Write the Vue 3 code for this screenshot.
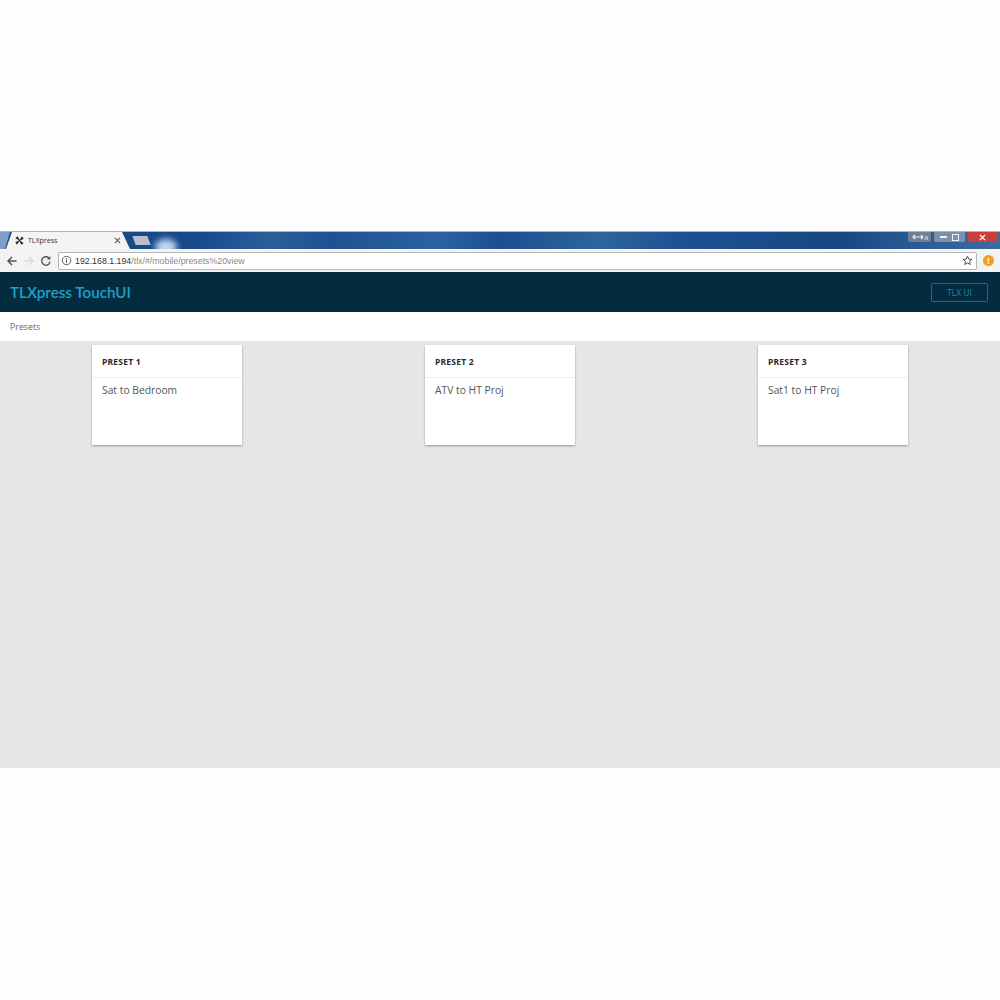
<script setup>
const presets = [
  { id: 1, title: 'PRESET 1', text: 'Sat to Bedroom' },
  { id: 2, title: 'PRESET 2', text: 'ATV to HT Proj' },
  { id: 3, title: 'PRESET 3', text: 'Sat1 to HT Proj' },
]
</script>

<template>
  <div class="page">
    <div class="shot">
      <div class="titlebar">
        <div class="glass-left"></div>
        <div class="tab">
          <svg class="favicon" viewBox="0 0 12 12" width="9" height="9">
            <path d="M6 6 3.500 1 1 2.500ZM6 6 11 3.500 9.500 1ZM6 6 1 8.500 2.500 11ZM6 6 8.500 11 11 9.500Z" fill="#222" stroke="#222" stroke-width=".8" />
          </svg>
          <span class="tab-title">TLXpress</span>
          <svg class="tab-close" viewBox="0 0 8 8" width="7" height="7"><path d="M1 1l6 6M7 1 1 7" fill="none" stroke="#555" stroke-width="1.200"/></svg>
        </div>
        <div class="newtab"></div>
        <div class="glow"></div>
        <div class="winbtns">
          <div class="restore">
            <svg width="18" height="8" viewBox="0 0 18 8"><path d="M2 4h10M4 2 2 4l2 2M10 2l2 2-2 2" fill="none" stroke="#e8edf2" stroke-width="1.200"/><path d="M14 7l1.500-4L17 7" fill="none" stroke="#d8dee6" stroke-width="1"/></svg>
          </div>
          <div class="winctl">
            <span class="min"></span>
            <span class="max"></span>
          </div>
          <div class="close">
            <svg viewBox="0 0 8 8" width="7" height="7"><path d="M1 1l6 6M7 1 1 7" fill="none" stroke="#fff" stroke-width="1.500"/></svg>
          </div>
        </div>
      </div>
      <div class="toolbar">
        <svg class="nav" viewBox="0 0 12 12" width="12" height="12"><path d="M10.500 6H2M6 2 2 6l4 4" fill="none" stroke="#555" stroke-width="1.500"/></svg>
        <svg class="nav" viewBox="0 0 12 12" width="12" height="12"><path d="M1.500 6H10M6 2l4 4-4 4" fill="none" stroke="#dcdcdc" stroke-width="1.500"/></svg>
        <svg class="nav" viewBox="0 0 12 12" width="12" height="12"><path d="M10 6.500A4.200 4.200 0 1 1 8.800 3" fill="none" stroke="#555" stroke-width="1.400"/><path d="M10.400 1v3.600H6.800z" fill="#555"/></svg>
        <div class="omnibox">
          <svg class="info" viewBox="0 0 12 12" width="11" height="11"><circle cx="6" cy="6" r="4.600" fill="none" stroke="#555" stroke-width="1"/><path d="M6 5.200v3.200M6 3.300v1" stroke="#555" stroke-width="1.100"/></svg>
          <span class="url"><span class="host">192.168.1.194</span>/tlx/#/mobile/presets%20view</span>
          <svg class="star" viewBox="0 0 12 12" width="11" height="11"><path d="M6 1.300 7.400 4.500l3.400.3-2.600 2.200.8 3.400L6 8.600l-3 1.800.8-3.400L1.200 4.800l3.400-.3z" fill="none" stroke="#444" stroke-width="1"/></svg>
        </div>
        <div class="alert">!</div>
      </div>
      <header class="appbar">
        <span class="brand">TLXpress TouchUI</span>
        <button class="tlx">TLX UI</button>
      </header>
      <div class="crumb">Presets</div>
      <main class="content">
        <section v-for="p in presets" :key="p.id" class="card">
          <div class="card-head">{{ p.title }}</div>
          <div class="card-body">{{ p.text }}</div>
        </section>
      </main>
    </div>
  </div>
</template>

<style>
html, body { margin: 0; background: #fff; }
</style>

<style scoped>
.page {
  width: 1000px;
  height: 1000px;
  padding-top: 231px;
  box-sizing: border-box;
  background: #fefefe;
  font-family: "Open Sans", "Liberation Sans", sans-serif;
  overflow: hidden;
}
.shot { display: flex; flex-direction: column; height: 537px; }
.titlebar {
  position: relative;
  height: 18px;
  flex: none;
  display: flex;
  align-items: flex-end;
  overflow: hidden;
  background: linear-gradient(100deg, #174888 0, #184a8a 20%, #2a5f9c 27%, #1f5290 33%, #2b629f 44%, #1c4f8e 50%, #2d649f 60%, #1e5190 68%, #184684 84%, #2a5a94 91%, #3d6b9f 100%);
  border-top: 1px solid #a9b6c6;
  box-sizing: border-box;
}
.glass-left {
  width: 10px;
  height: 100%;
  flex: none;
  background: #7f9fc9;
  clip-path: polygon(0 0, 10px 0, 5px 100%, 0 100%);
}
.tab {
  display: flex;
  align-items: center;
  width: 124px;
  height: 100%;
  margin-left: -4px;
  flex: none;
  box-sizing: border-box;
  padding: 0 9px;
  background: #f4f4f4;
  clip-path: polygon(6px 0, 116px 0, 124px 100%, 0 100%);
  color: #333;
}
.favicon { flex: none; margin-right: 4px; }
.tab-title { flex: 1; font-family: "Open Sans", sans-serif; font-size: 7px; }
.tab-close { flex: none; }
.newtab {
  width: 15px;
  height: 9px;
  margin: 0 0 4px 4px;
  background: #b9bec8;
  transform: skewX(20deg);
}
.glow {
  position: absolute;
  left: 155px;
  top: 7px;
  width: 22px;
  height: 16px;
  border-radius: 50%;
  background: #c0d6ec;
  filter: blur(3px);
}
.winbtns {
  position: absolute;
  right: 3px;
  top: 0;
  display: flex;
  gap: 3px;
  height: 10px;
}
.restore {
  width: 23px;
  display: flex;
  align-items: center;
  justify-content: center;
  background: #6f7f95;
  border-radius: 0 0 2px 2px;
}
.winctl {
  width: 31px;
  display: flex;
  align-items: center;
  justify-content: space-around;
  padding: 0 3px;
  box-sizing: border-box;
  background: #7a90ab;
  border-radius: 0 0 2px 2px;
}
.min { width: 7px; height: 2px; background: #eef1f5; }
.max { width: 5px; height: 5px; border: 1px solid #eef1f5; }
.close {
  width: 29px;
  display: flex;
  align-items: center;
  justify-content: center;
  background: #c9403a;
  border-radius: 0 0 2px 2px;
}
.toolbar {
  height: 23px;
  flex: none;
  display: flex;
  align-items: center;
  background: #f3f3f3;
  padding: 0 6px;
  gap: 5px;
  box-sizing: border-box;
}
.nav { flex: none; }
.omnibox {
  flex: 1;
  height: 18px;
  margin: 0 1px;
  display: flex;
  align-items: center;
  gap: 3px;
  padding: 0 3px;
  background: #fff;
  border: 1px solid #b5b5b5;
  border-radius: 2px;
  box-sizing: border-box;
  font-size: 8.800px;
  font-family: "Liberation Sans", sans-serif;
}
.info { flex: none; margin-left: -1px; }
.url { flex: 1; color: #8a8a8a; }
.host { color: #333; }
.star { flex: none; }
.alert {
  width: 11px;
  height: 11px;
  flex: none;
  border-radius: 50%;
  background: #f39c1f;
  color: #fff;
  font-size: 8px;
  font-weight: 700;
  line-height: 11px;
  text-align: center;
}
.appbar {
  height: 40px;
  flex: none;
  display: flex;
  align-items: center;
  justify-content: space-between;
  padding: 0 12px 0 10px;
  background: #042c40;
  box-sizing: border-box;
}
.brand {
  font-family: Lato, sans-serif;
  font-size: 15.200px;
  font-weight: 600;
  color: #1ba3c9;
}
.tlx {
  width: 57px;
  height: 19px;
  padding: 0;
  background: transparent;
  border: 1px solid #146f8e;
  border-radius: 2px;
  color: #158aa9;
  font: 400 8.500px "Open Sans", sans-serif;
}
.crumb {
  height: 29px;
  flex: none;
  display: flex;
  align-items: center;
  padding-left: 10px;
  background: #fff;
  color: #666;
  font-size: 8.800px;
  box-sizing: border-box;
}
.content {
  flex: 1;
  display: flex;
  justify-content: space-between;
  align-items: flex-start;
  padding: 4px 92px 0;
  background: #e6e6e6;
}
.card {
  width: 150px;
  height: 100px;
  background: #fff;
  box-shadow: 0 1px 2px rgba(0, 0, 0, .35);
}
.card-head {
  height: 33px;
  box-sizing: border-box;
  padding-left: 10px;
  display: flex;
  align-items: center;
  border-bottom: 1px solid #ededed;
  color: #2a2a2a;
  font-size: 8.500px;
  font-weight: 700;
  letter-spacing: .2px;
}
.card-body {
  padding: 5px 10px;
  color: #555;
  font-size: 10.300px;
  line-height: 15px;
}
</style>
